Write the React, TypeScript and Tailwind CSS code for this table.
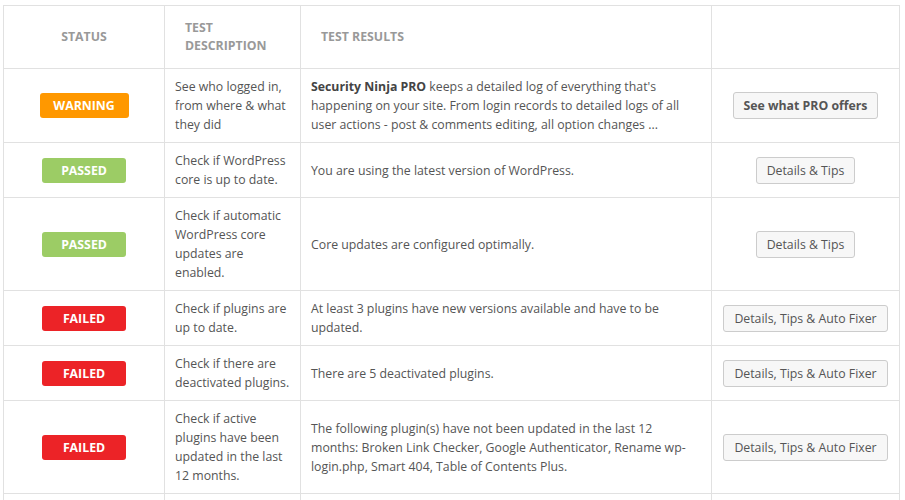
type Status = "warning" | "passed" | "failed";

type Row = {
  status: Status;
  desc: string;
  result: React.ReactNode;
  button: string;
  pro?: boolean;
};

const badgeClass: Record<Status, string> = {
  warning: "bg-[#ff9800] w-[89px]",
  passed: "bg-[#9ccc65] w-[84px]",
  failed: "bg-[#ec2327] w-[84px]",
};

const rows: Row[] = [
  {
    status: "warning",
    desc: "See who logged in, from where & what they did",
    result: (
      <>
        <b className="font-bold text-[#444]">Security Ninja PRO</b> keeps a detailed log of everything that's
        happening on your site. From login records to detailed logs of all user actions - post & comments
        editing, all option changes ...
      </>
    ),
    button: "See what PRO offers",
    pro: true,
  },
  {
    status: "passed",
    desc: "Check if WordPress core is up to date.",
    result: "You are using the latest version of WordPress.",
    button: "Details & Tips",
  },
  {
    status: "passed",
    desc: "Check if automatic WordPress core updates are enabled.",
    result: "Core updates are configured optimally.",
    button: "Details & Tips",
  },
  {
    status: "failed",
    desc: "Check if plugins are up to date.",
    result: "At least 3 plugins have new versions available and have to be updated.",
    button: "Details, Tips & Auto Fixer",
  },
  {
    status: "failed",
    desc: "Check if there are deactivated plugins.",
    result: "There are 5 deactivated plugins.",
    button: "Details, Tips & Auto Fixer",
  },
  {
    status: "failed",
    desc: "Check if active plugins have been updated in the last 12 months.",
    result:
      "The following plugin(s) have not been updated in the last 12 months: Broken Link Checker, Google Authenticator, Rename wp-login.php, Smart 404, Table of Contents Plus.",
    button: "Details, Tips & Auto Fixer",
  },
  {
    status: "passed",
    desc: "Check if there are deactivated themes.",
    result: "There are no deactivated themes.",
    button: "Details & Tips",
  },
];

export default function App() {
  return (
    <div className="h-[500px] overflow-hidden bg-white pl-[3px] pt-[5px] font-['Open_Sans',sans-serif] text-[12.3px] text-[#555]">
      <table className="w-[896px] table-fixed border-collapse border border-[#e1e1e1] bg-white">
        <colgroup>
          <col className="w-[161px]" />
          <col className="w-[136px]" />
          <col className="w-[411px]" />
          <col className="w-[188px]" />
        </colgroup>
        <thead>
          <tr className="h-[63px] text-left text-[12.3px] font-bold uppercase leading-[18px] text-[#999]">
            <th className="border border-[#e1e1e1] px-[20px] text-center">Status</th>
            <th className="border border-[#e1e1e1] px-[20px]">Test Description</th>
            <th className="border border-[#e1e1e1] px-[20px]">Test Results</th>
            <th className="border border-[#e1e1e1]"></th>
          </tr>
        </thead>
        <tbody className="leading-[19px]">
          {rows.map((r, i) => (
            <tr key={i}>
              <td className="border border-[#e1e1e1] py-[8px] text-center align-middle">
                <span
                  className={`inline-block h-[25px] rounded-[3px] text-[12.3px] font-bold uppercase leading-[25px] text-white ${badgeClass[r.status]}`}
                >
                  {r.status}
                </span>
              </td>
              <td className="border border-[#e1e1e1] pl-[10px] pr-[6px] py-[8px] align-middle">{r.desc}</td>
              <td className="border border-[#e1e1e1] px-[10px] py-[8px] align-middle">{r.result}</td>
              <td className="border border-[#e1e1e1] py-[8px] text-center align-middle">
                <button
                  className={`inline-block h-[27px] rounded-[3px] border border-[#ccc] bg-[#f7f7f7] px-[10px] text-[12.3px] leading-[25px] text-[#555] ${
                    r.pro ? "font-bold text-[#333]" : ""
                  }`}
                >
                  {r.button}
                </button>
              </td>
            </tr>
          ))}
        </tbody>
      </table>
    </div>
  );
}
